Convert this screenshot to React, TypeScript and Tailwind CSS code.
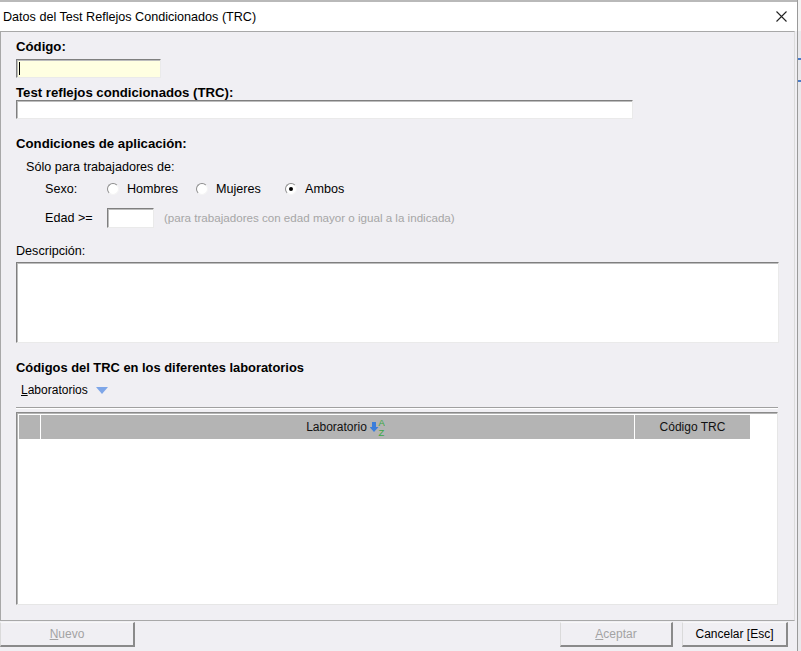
import React from 'react'

const font = { fontFamily: '"Liberation Sans", Arial, sans-serif' }

function Radio({ label, checked }: { label: string; checked?: boolean }) {
  return (
    <div className="flex items-center w-[89px]">
      <div className="w-[12px] h-[12px] rounded-full bg-white border border-t-[#8d8d8d] border-l-[#8d8d8d] border-b-[#f4f4f4] border-r-[#f4f4f4] flex items-center justify-center">
        {checked && <div className="w-[4px] h-[4px] rounded-full bg-black" />}
      </div>
      <span className="ml-[8px]">{label}</span>
    </div>
  )
}

function SortIcon() {
  return (
    <svg width="15" height="18" viewBox="0 0 15 18" className="ml-[3px]">
      <path d="M2 4h4v5h2.5L4 14 -0.5 9H2z" fill="#3b7ddb" />
      <text x="8.5" y="8" fontSize="9.5" fill="#39a843" fontFamily="Liberation Sans, sans-serif">A</text>
      <text x="8.5" y="17.5" fontSize="9.5" fill="#39a843" fontFamily="Liberation Sans, sans-serif">Z</text>
    </svg>
  )
}

export default function App() {
  return (
    <div className="w-[801px] h-[651px] flex bg-[#e9e9ec] overflow-hidden text-[12.6px] text-black" style={font}>
      <div className="w-[798px] h-full flex flex-col bg-[#f0eff3] border-r border-[#9a9a9a]">
        {/* Title bar */}
        <div className="h-[31px] shrink-0 bg-white border-t-2 border-[#b9b9b9] flex items-center justify-between pl-[3px] pr-[10px]">
          <span className="leading-[14px] text-[12.6px]">Datos del Test Reflejos Condicionados (TRC)</span>
          <svg width="11" height="11" viewBox="0 0 11 11">
            <path d="M0.5 0.5l10 10M10.5 0.5l-10 10" stroke="#222" strokeWidth="1.1" />
          </svg>
        </div>

        {/* Main panel */}
        <div className="w-[795px] flex flex-col border border-[#a8a8a8] border-r-[#dcdcdc] pl-[15px] pt-[8px] pb-[15px]">
          <div className="h-[14px] leading-[14px] font-bold text-[13.2px]">Código:</div>
          <div className="mt-[5px] w-[145px] h-[19px] bg-[#ffffe1] border border-t-[#7f7f7f] border-l-[#7f7f7f] border-b-[#eaeaea] border-r-[#eaeaea] shadow-[inset_1px_1px_0_#bdbdbd] flex items-center pl-[2px]">
            <div className="w-[1px] h-[13px] bg-black" />
          </div>

          <div className="mt-[8px] h-[14px] leading-[14px] font-bold text-[13.2px]">Test reflejos condicionados (TRC):</div>
          <div className="w-[617px] h-[19px] bg-white border border-t-[#7f7f7f] border-l-[#7f7f7f] border-b-[#eaeaea] border-r-[#eaeaea] shadow-[inset_1px_1px_0_#bdbdbd]" />

          <div className="mt-[18px] h-[14px] leading-[14px] font-bold text-[13.2px]">Condiciones de aplicación:</div>
          <div className="mt-[9px] h-[14px] leading-[14px] pl-[10px]">Sólo para trabajadores de:</div>
          <div className="mt-[8px] h-[14px] leading-[14px] flex items-center pl-[29px]">
            <span className="w-[62px]">Sexo:</span>
            <Radio label="Hombres" />
            <Radio label="Mujeres" />
            <Radio label="Ambos" checked />
          </div>
          <div className="mt-[12px] h-[20px] flex items-center pl-[29px]">
            <span className="w-[62px]">Edad &gt;=</span>
            <div className="w-[47px] h-[20px] bg-white border border-t-[#7f7f7f] border-l-[#7f7f7f] border-b-[#eaeaea] border-r-[#eaeaea] shadow-[inset_1px_1px_0_#bdbdbd]" />
            <span className="ml-[10px] text-[#a6a6a6] text-[11.6px]">(para trabajadores con edad mayor o igual a la indicada)</span>
          </div>

          <div className="mt-[16px] h-[14px] leading-[14px]">Descripción:</div>
          <div className="mt-[4px] w-[763px] h-[81px] bg-white border border-t-[#7f7f7f] border-l-[#7f7f7f] border-b-[#eaeaea] border-r-[#eaeaea] shadow-[inset_1px_1px_0_#bdbdbd]" />

          <div className="mt-[18px] h-[14px] leading-[14px] font-bold text-[12.9px]">Códigos del TRC en los diferentes laboratorios</div>
          <div className="mt-[8px] h-[14px] leading-[14px] flex items-center pl-[5px] text-[12px]">
            <span><span className="underline">L</span>aboratorios</span>
            <svg width="12" height="7" viewBox="0 0 12 7" className="ml-[8px]">
              <path d="M0 0h12L6 7z" fill="#7ea6e8" />
            </svg>
          </div>
          <div className="mt-[10px] w-[762px] h-[2px] border-t border-[#a0a0a0] border-b border-b-white" />

          {/* Grid */}
          <div className="mt-[3px] w-[762px] h-[193px] bg-white border border-t-[#8a8a8a] border-l-[#8a8a8a] border-b-[#e6e6e6] border-r-[#e6e6e6] shadow-[inset_1px_1px_0_#b5b5b5] pl-[2px] pt-[2px]">
            <div className="flex h-[24px] text-[#111] text-[12px]">
              <div className="w-[22px] h-full bg-[#b4b4b4] border-r border-white" />
              <div className="w-[594px] h-full bg-[#b4b4b4] border-r border-white flex items-center justify-center pl-[16px]">
                <span>Laboratorio</span>
                <SortIcon />
              </div>
              <div className="w-[115px] h-full bg-[#b4b4b4] flex items-center justify-center">Código TRC</div>
            </div>
          </div>
        </div>

        {/* Buttons */}
        <div className="flex items-start pt-[1px] text-[12px]">
          <button className="w-[135px] h-[25px] bg-[#f0eff3] border border-l-[#dadada] border-t-[#f8f8f8] border-r-2 border-r-[#8a8a8a] border-b-2 border-b-[#8a8a8a] text-[#a3a3a3]">
            <span className="underline">N</span>uevo
          </button>
          <div className="flex-1" />
          <button className="w-[113px] h-[25px] bg-[#f0eff3] border border-l-[#dadada] border-t-[#f8f8f8] border-r-2 border-r-[#8a8a8a] border-b-2 border-b-[#8a8a8a] text-[#a3a3a3]">
            <span className="underline">A</span>ceptar
          </button>
          <button className="ml-[9px] mr-[9px] w-[106px] h-[25px] bg-[#f0eff3] border border-l-[#dadada] border-t-[#f8f8f8] border-r-2 border-r-[#8a8a8a] border-b-2 border-b-[#8a8a8a] text-black">
            Cancelar [Esc]
          </button>
        </div>
      </div>
      <div className="flex-1 flex flex-col">
        <div className="h-[31px] bg-[#f4f4f4]" />
        <div className="mt-[27px] h-[2px] bg-[#4a7cc9]" />
        <div className="mt-[20px] h-[2px] bg-[#4a7cc9]" />
      </div>
    </div>
  )
}
